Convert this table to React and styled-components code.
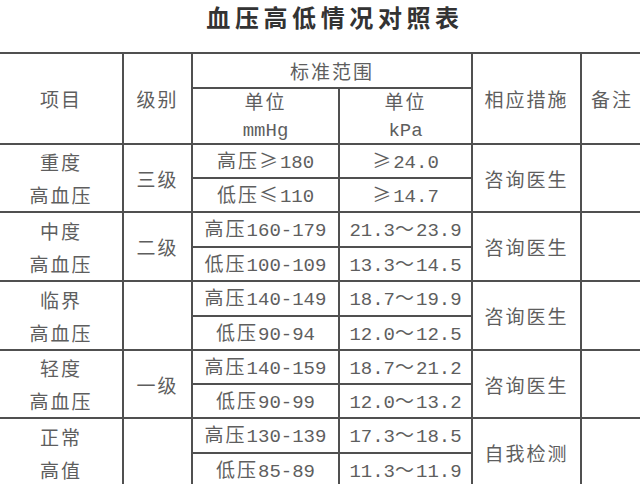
import styled, { createGlobalStyle } from 'styled-components';

const GlobalStyle = createGlobalStyle`
  html, body {
    margin: 0;
    padding: 0;
    background: #fff;
  }
`

const Page = styled.div`
  width: 640px;
  height: 484px;
  overflow: hidden;
  background: #fff;
  font-family: "Noto Sans CJK SC", "Noto Sans", sans-serif;
`

const Header = styled.header`
  display: flex;
  justify-content: center;
  align-items: flex-start;
  height: 52px;
  padding-left: 30px;
  box-sizing: border-box;
`

const Title = styled.h1`
  margin: 4px 0 0;
  font-size: 24px;
  line-height: 26px;
  font-weight: 700;
  letter-spacing: 4.6px;
  color: #333;
  white-space: nowrap;
`

const Table = styled.div`
  display: grid;
  grid-template-columns: 122px 67px 145px 131px 107px 60px;
  grid-template-rows: 33px 54px 32px 32px 33px 32px 33px 32px 32px 32px 33px 32px;
  gap: 2px;
  padding: 2px;
  margin-left: -2px;
  width: max-content;
  background: #505050;
`

const Cell = styled.div`
  grid-column: ${p => p.$col};
  grid-row: ${p => p.$row};
  display: flex;
  flex-direction: column;
  align-items: center;
  justify-content: center;
  background: #fff;
  color: #5e5e5e;
  font-size: 19px;
  letter-spacing: 2px;
  line-height: ${p => p.$lh || '33px'};
  white-space: nowrap;
`

const Lat = styled.span`
  font-family: "Liberation Mono", monospace;
  font-size: 19px;
  letter-spacing: 0;
`

const LAT = /^[0-9A-Za-z.\-]+$/

// latin runs get the half-width mono face, the rest stays CJK
const Txt = ({ text }) =>
  text.split(/([0-9A-Za-z.\-]+)/).map((part, i) =>
    LAT.test(part) ? <Lat key={i}>{part}</Lat> : part
  )

const groups = [
  { name: ['重度', '高血压'], level: '三级', action: '咨询医生',
    rows: [['高压≥180', '≥24.0'], ['低压≤110', '≥14.7']] },
  { name: ['中度', '高血压'], level: '二级', action: '咨询医生',
    rows: [['高压160-179', '21.3～23.9'], ['低压100-109', '13.3～14.5']] },
  { name: ['临界', '高血压'], level: '', action: '咨询医生',
    rows: [['高压140-149', '18.7～19.9'], ['低压90-94', '12.0～12.5']] },
  { name: ['轻度', '高血压'], level: '一级', action: '咨询医生',
    rows: [['高压140-159', '18.7～21.2'], ['低压90-99', '12.0～13.2']] },
  { name: ['正常', '高值'], level: '', action: '自我检测',
    rows: [['高压130-139', '17.3～18.5'], ['低压85-89', '11.3～11.9']] },
]

const App = () => {
  return (
    <Page>
      <GlobalStyle />
      <Header>
        <Title>血压高低情况对照表</Title>
      </Header>
      <Table>
        <Cell $col="1" $row="1 / 3">项目</Cell>
        <Cell $col="2" $row="1 / 3">级别</Cell>
        <Cell $col="3 / 5" $row="1">标准范围</Cell>
        <Cell $col="3" $row="2" $lh="27px">
          <div>单位</div>
          <div><Txt text="mmHg" /></div>
        </Cell>
        <Cell $col="4" $row="2" $lh="27px">
          <div>单位</div>
          <div><Txt text="kPa" /></div>
        </Cell>
        <Cell $col="5" $row="1 / 3">相应措施</Cell>
        <Cell $col="6" $row="1 / 3">备注</Cell>

        {groups.map((g, i) => {
          const start = 3 + i * 2
          const span = `${start} / ${start + 2}`
          return [
            <Cell key={`n${i}`} $col="1" $row={span}>
              <div>{g.name[0]}</div>
              <div>{g.name[1]}</div>
            </Cell>,
            <Cell key={`l${i}`} $col="2" $row={span}>{g.level}</Cell>,
            ...g.rows.map((r, j) => [
              <Cell key={`m${i}${j}`} $col="3" $row={start + j}><div><Txt text={r[0]} /></div></Cell>,
              <Cell key={`k${i}${j}`} $col="4" $row={start + j}><div><Txt text={r[1]} /></div></Cell>,
            ]),
            <Cell key={`a${i}`} $col="5" $row={span}>{g.action}</Cell>,
            <Cell key={`b${i}`} $col="6" $row={span}></Cell>,
          ]
        })}
      </Table>
    </Page>
  )
}

export default App
